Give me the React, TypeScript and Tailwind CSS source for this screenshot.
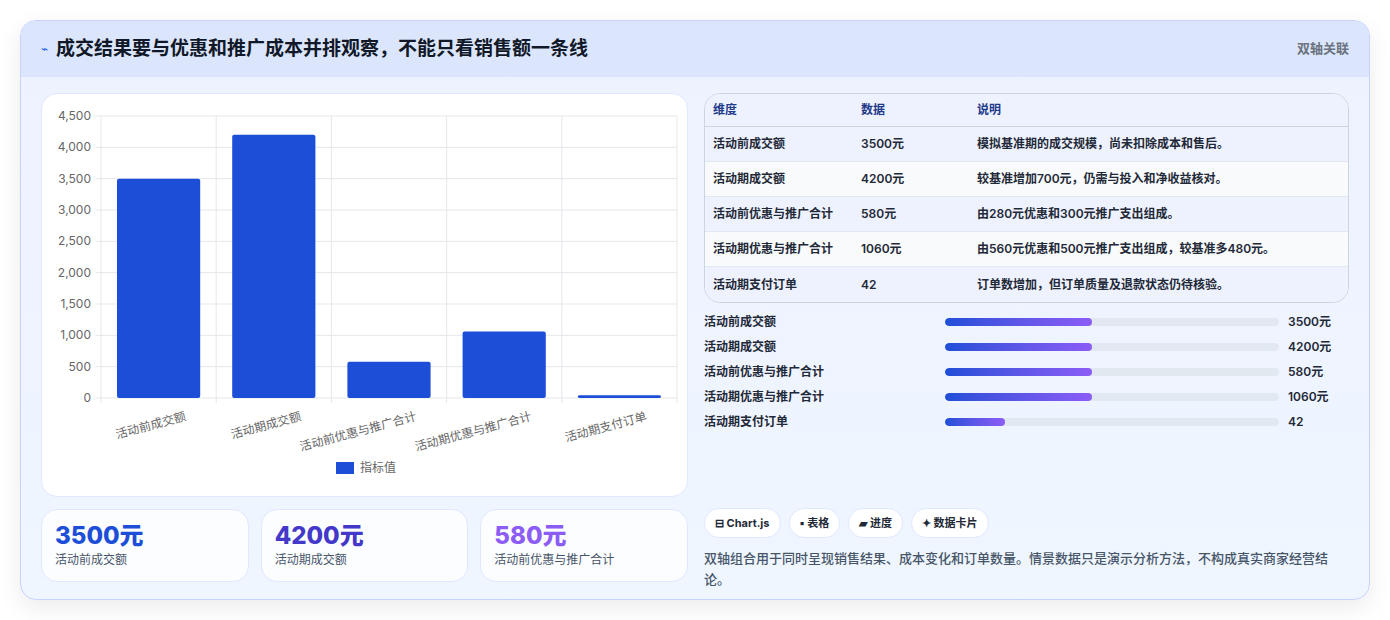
const rows = [
  ['活动前成交额', '3500元', '模拟基准期的成交规模，尚未扣除成本和售后。'],
  ['活动期成交额', '4200元', '较基准增加700元，仍需与投入和净收益核对。'],
  ['活动前优惠与推广合计', '580元', '由280元优惠和300元推广支出组成。'],
  ['活动期优惠与推广合计', '1060元', '由560元优惠和500元推广支出组成，较基准多480元。'],
  ['活动期支付订单', '42', '订单数增加，但订单质量及退款状态仍待核验。'],
];
const bars = [
  ['活动前成交额', '3500元', 44],
  ['活动期成交额', '4200元', 44],
  ['活动前优惠与推广合计', '580元', 44],
  ['活动期优惠与推广合计', '1060元', 44],
  ['活动期支付订单', '42', 18],
] as const;
const values = [3500, 4200, 580, 1060, 42];

function Chart() {
  const x0 = 59, x1 = 635, y0 = 22, y1 = 304;
  const cw = (x1 - x0) / 5;
  const sy = (v: number) => y1 - (v / 4500) * (y1 - y0);
  return (
    <svg width="646" height="402" className="block">
      {Array.from({ length: 10 }, (_, i) => (
        <g key={i}>
          <line x1={x0 - 5} x2={x1} y1={sy(i * 500)} y2={sy(i * 500)} stroke="#e5e7eb" />
          <text x={x0 - 10} y={sy(i * 500) + 4} textAnchor="end" fontSize="12" fill="#666">{(i * 500).toLocaleString('en-US')}</text>
        </g>
      ))}
      {Array.from({ length: 6 }, (_, i) => (
        <line key={i} x1={x0 + i * cw} x2={x0 + i * cw} y1={y0} y2={y1 + 5} stroke="#e5e7eb" />
      ))}
      {values.map((v, i) => (
        <rect key={i} x={x0 + i * cw + 16} y={sy(v)} width={cw - 32} height={y1 - sy(v)} rx="2" fill="#1d4ed8" />
      ))}
      {rows.map((r, i) => (
        <text key={i} x={x0 + i * cw + cw / 2 + 28} y={y1 + 22} textAnchor="end" fontSize="12" fill="#666" transform={`rotate(-15 ${x0 + i * cw + cw / 2 + 28} ${y1 + 22})`}>{r[0]}</text>
      ))}
      <rect x="294" y="368" width="18" height="12" fill="#1d4ed8" />
      <text x="318" y="378" fontSize="12" fill="#666">指标值</text>
    </svg>
  );
}

export default function App() {
  return (
    <div className="w-[1390px] h-[620px] bg-white p-5 pb-0" style={{ fontFamily: 'Inter, "Noto Sans CJK SC", sans-serif' }}>
      <div className="h-[580px] rounded-2xl border border-[#c7d2fe] bg-gradient-to-b from-[#eef2ff] to-[#eff6ff] shadow-[0_8px_24px_rgba(0,0,0,0.08)] overflow-hidden">
        <div className="h-14 bg-[#dbe6fd] flex items-center justify-between px-5">
          <div className="flex items-center gap-2">
            <span className="text-[#2563eb] text-xs">⌁</span>
            <span className="text-[19px] font-bold text-[#111827]">成交结果要与优惠和推广成本并排观察，不能只看销售额一条线</span>
          </div>
          <span className="text-[13px] font-semibold text-[#6b7280]">双轴关联</span>
        </div>
        <div className="flex gap-4 px-5 pt-4">
          <div className="w-[647px] flex flex-col gap-3">
            <div className="h-[404px] bg-white rounded-2xl border border-[#e0e7ff]">
              <Chart />
            </div>
            <div className="flex gap-3">
              {[['3500元', '活动前成交额', 'text-[#1d4ed8]'], ['4200元', '活动期成交额', 'text-[#4338ca]'], ['580元', '活动前优惠与推广合计', 'text-[#8b5cf6]']].map(([v, l, c]) => (
                <div key={l} className="flex-1 h-[73px] bg-white/80 rounded-2xl border border-[#e0e7ff] px-[13px] pt-[10px]">
                  <div className={`text-[24px] font-extrabold leading-8 ${c}`}>{v}</div>
                  <div className="text-xs text-[#475569]">{l}</div>
                </div>
              ))}
            </div>
          </div>
          <div className="flex-1 flex flex-col">
            <div className="rounded-2xl border border-[#cbd5e1] overflow-hidden text-xs text-[#1f2937] font-semibold">
              <div className="flex h-[33px] items-center bg-[#eef2ff] border-b border-[#cbd5e1] text-[#1e3a8a]">
                <div className="w-[156px] pl-2">维度</div><div className="w-[116px]">数据</div><div>说明</div>
              </div>
              {rows.map((r, i) => (
                <div key={i} className={`flex h-[35px] items-center ${i % 2 ? 'bg-[#f8fafc]' : 'bg-[#eef2ff]'} ${i < 4 ? 'border-b border-[#e2e8f0]' : ''}`}>
                  <div className="w-[156px] pl-2">{r[0]}</div><div className="w-[116px]">{r[1]}</div><div>{r[2]}</div>
                </div>
              ))}
            </div>
            <div className="mt-[10px] flex flex-col gap-[7px] text-xs font-semibold text-[#1f2937]">
              {bars.map(([l, v, w]) => (
                <div key={l} className="flex items-center h-[18px]">
                  <div className="w-[241px]">{l}</div>
                  <div className="w-[334px] h-2 rounded-full bg-[#e2e8f0] overflow-hidden">
                    <div className="h-full rounded-full bg-gradient-to-r from-[#1d4ed8] to-[#8b5cf6]" style={{ width: `${w}%` }} />
                  </div>
                  <div className="ml-[9px]">{v}</div>
                </div>
              ))}
            </div>
            <div className="mt-[77px] flex gap-2 text-[11px] font-bold text-[#1f2937]">
              {['⊟ Chart.js', '▪ 表格', '▰ 进度', '✦ 数据卡片'].map(t => (
                <span key={t} className="h-[30px] px-[10px] flex items-center bg-white rounded-full border border-[#e0e7ff]">{t}</span>
              ))}
            </div>
            <p className="mt-[10px] text-[13px] leading-[21px] text-[#475569] font-medium pr-4">双轴组合用于同时呈现销售结果、成本变化和订单数量。情景数据只是演示分析方法，不构成真实商家经营结论。</p>
          </div>
        </div>
      </div>
    </div>
  );
}
